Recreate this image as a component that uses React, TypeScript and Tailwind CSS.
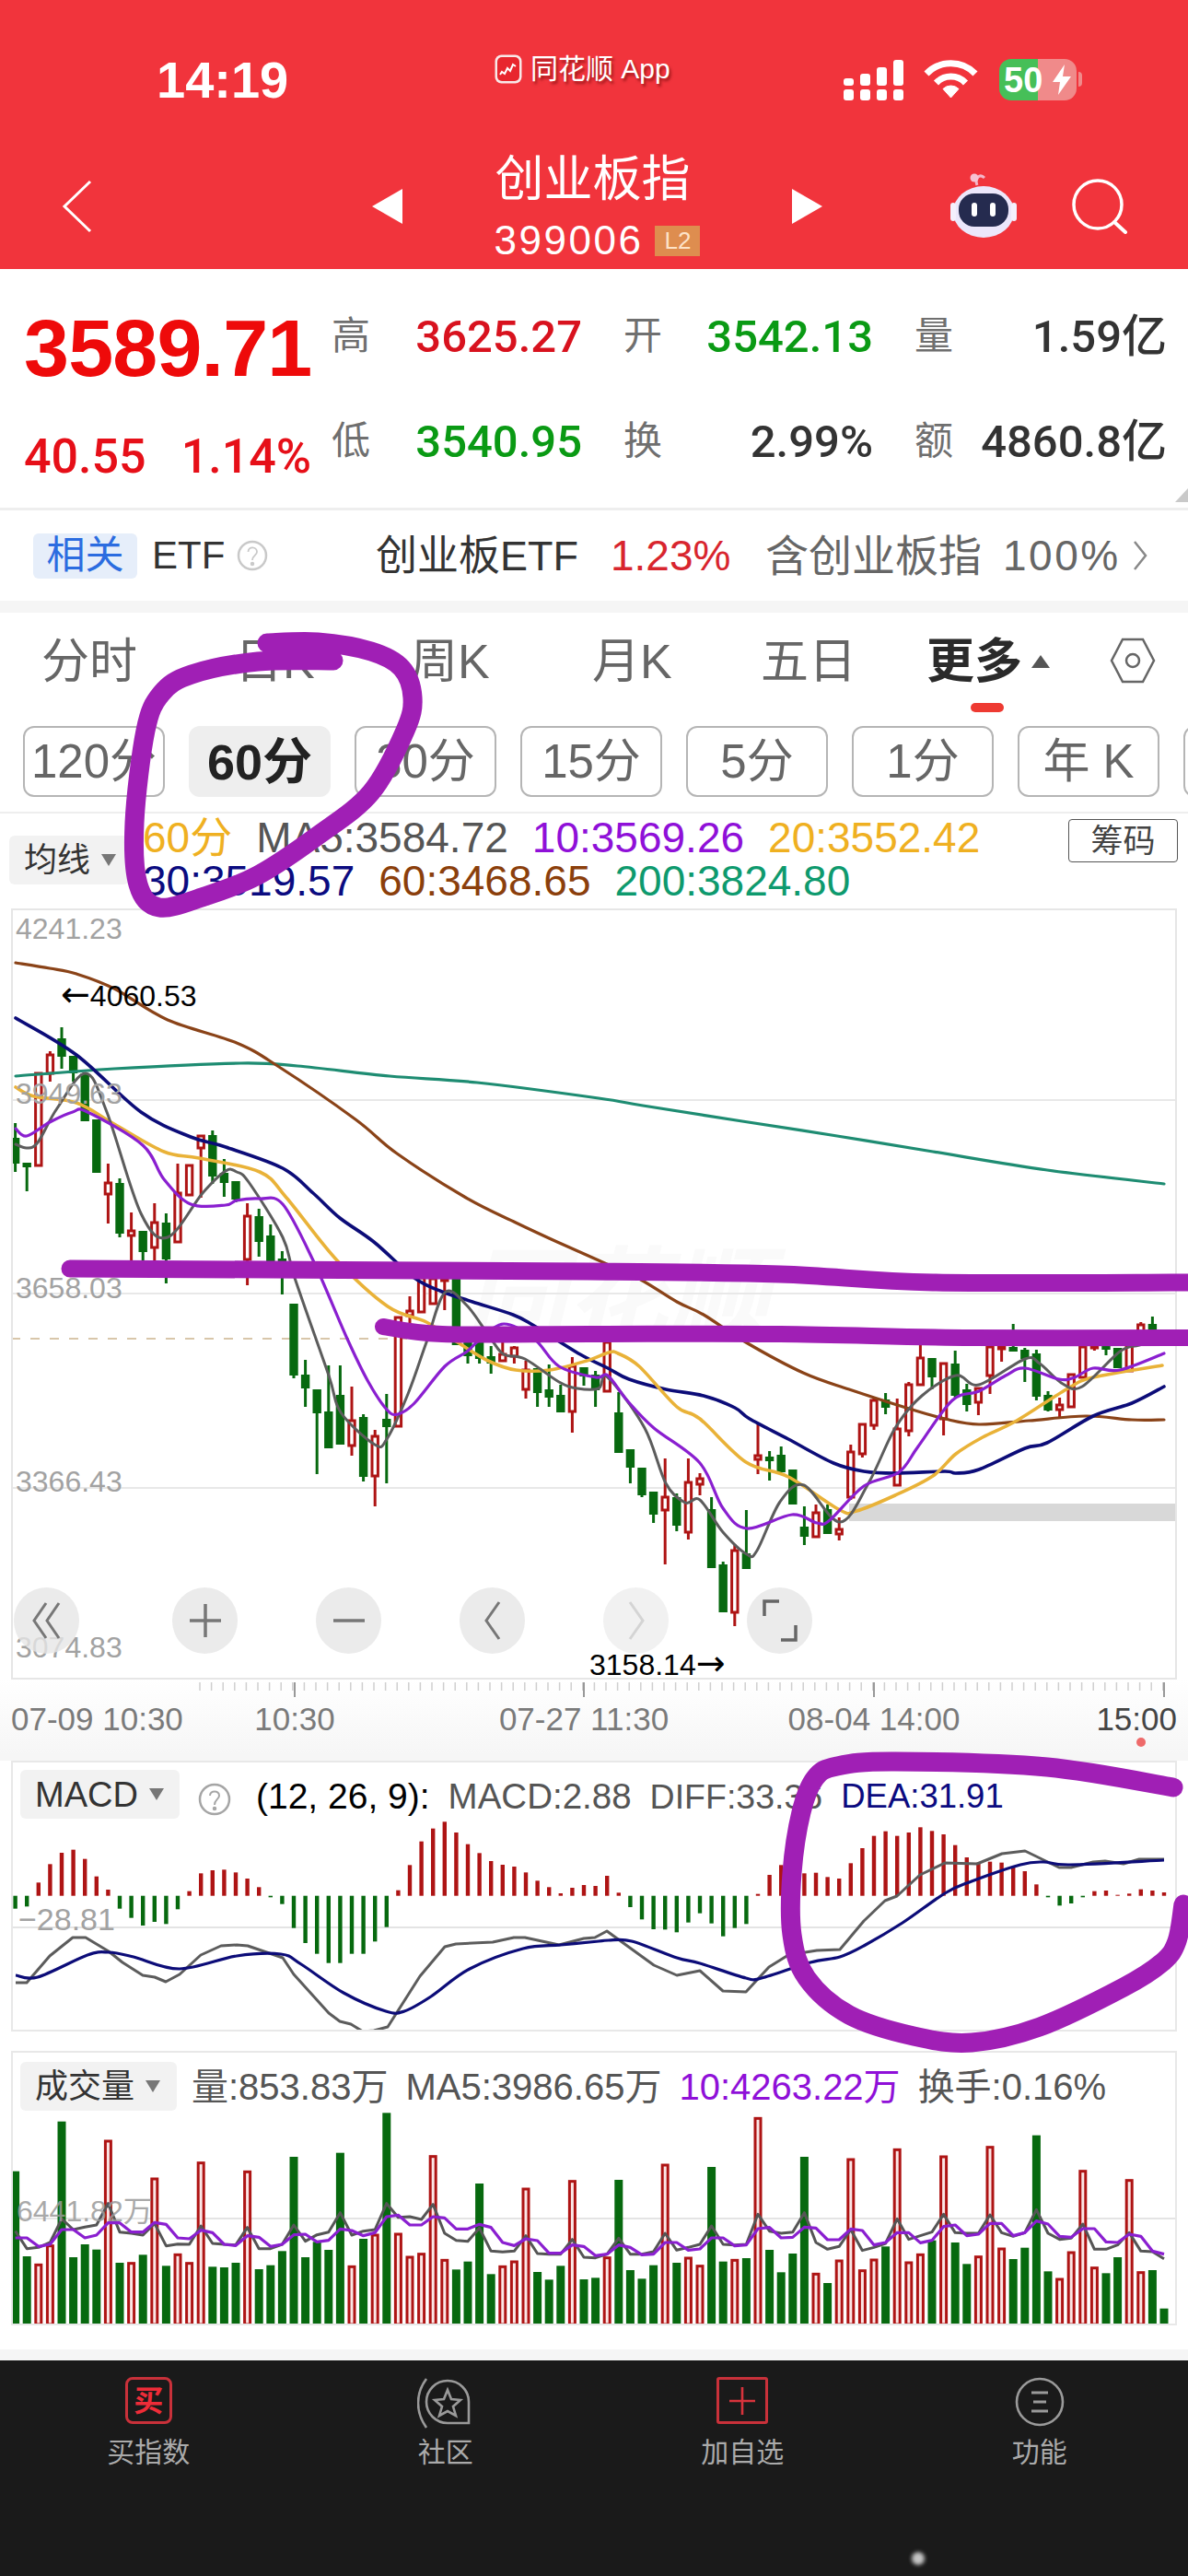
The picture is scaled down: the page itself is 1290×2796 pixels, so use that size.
import React from "react";

type P = [number, number];
const pairs = (a: number[]): P[] => {
  const r: P[] = [];
  for (let i = 0; i < a.length; i += 2) r.push([a[i], a[i + 1]]);
  return r;
};
const smooth = (p: P[]) => {
  let d = `M${p[0][0]} ${p[0][1]}`;
  for (let i = 0; i < p.length - 1; i++) {
    const a = p[Math.max(i - 1, 0)], b = p[i], c = p[i + 1], e = p[Math.min(i + 2, p.length - 1)];
    const k = 6;
    d += ` C${(b[0] + (c[0] - a[0]) / k).toFixed(1)} ${(b[1] + (c[1] - a[1]) / k).toFixed(1)} ${(c[0] - (e[0] - b[0]) / k).toFixed(1)} ${(c[1] - (e[1] - b[1]) / k).toFixed(1)} ${c[0]} ${c[1]}`;
  }
  return d;
};
const X = (i: number) => 16.6 + 12.6 * i;
const GREEN = "#07690f";
const RED = "#ae1414";
const PURPLE = "#a01fb5";

// [red?, bodyTop, bodyBottom, wickTop, wickBottom]
const candles: number[][] = [
  [0,1235,1263,1219,1272],[0,1262,1267,1262,1293],[1,1165,1265,1165,1265],[1,1145,1165,1141,1174],[0,1127,1147,1115,1160],
  [0,1146,1165,1146,1174],[0,1165,1217,1165,1217],[0,1215,1273,1215,1273],[1,1284,1296,1263,1328],[0,1284,1339,1279,1343],
  [1,1336,1341,1316,1368],[0,1336,1359,1336,1368],[1,1327,1354,1306,1368],[0,1327,1367,1317,1393],[1,1295,1348,1263,1348],
  [1,1265,1297,1265,1297],[1,1233,1246,1233,1300],[0,1232,1277,1227,1285],[0,1273,1284,1258,1299],[0,1282,1302,1282,1305],
  [1,1320,1367,1306,1395],[0,1320,1348,1312,1364],[0,1341,1370,1329,1372],[0,1366,1378,1358,1405],[0,1415,1493,1415,1496],
  [0,1492,1507,1476,1527],[0,1508,1534,1508,1600],[0,1532,1572,1482,1572],[0,1514,1568,1482,1568],[1,1542,1569,1505,1580],
  [0,1538,1603,1535,1608],[1,1559,1602,1552,1635],[0,1540,1549,1513,1610],[1,1430,1548,1430,1548],[1,1423,1428,1407,1453],
  [1,1387,1424,1387,1424],[1,1388,1415,1388,1415],[1,1387,1390,1387,1422],[0,1388,1460,1388,1460],[0,1457,1472,1445,1480],
  [0,1452,1475,1452,1480],[0,1472,1480,1461,1491],[1,1470,1477,1440,1477],[1,1463,1472,1461,1480],[1,1487,1508,1477,1518],
  [0,1485,1512,1485,1527],[0,1508,1517,1481,1527],[0,1514,1533,1503,1533],[1,1483,1532,1473,1555],[0,1484,1494,1484,1504],
  [0,1492,1509,1488,1527],[1,1457,1510,1440,1510],[0,1533,1577,1511,1577],[0,1573,1593,1573,1610],[0,1593,1623,1593,1625],
  [0,1619,1644,1619,1653],[1,1625,1639,1583,1698],[0,1625,1656,1621,1662],[1,1609,1663,1583,1671],[1,1605,1611,1599,1623],
  [0,1638,1702,1625,1702],[0,1698,1750,1695,1750],[1,1683,1750,1676,1765],[0,1686,1703,1639,1703],[1,1580,1584,1545,1600],
  [0,1581,1586,1575,1607],[0,1579,1598,1570,1598],[0,1595,1633,1595,1633],[0,1657,1668,1635,1677],[1,1642,1668,1633,1668],
  [0,1638,1665,1633,1665],[1,1660,1665,1647,1672],[1,1576,1625,1568,1628],[1,1546,1578,1546,1582],[1,1520,1547,1518,1552],
  [0,1519,1528,1512,1535],[1,1551,1612,1518,1612],[1,1503,1553,1500,1559],[1,1474,1503,1460,1503],[0,1474,1495,1474,1508],
  [1,1480,1540,1480,1558],[0,1480,1515,1466,1517],[0,1508,1525,1502,1532],[1,1507,1522,1507,1536],[1,1462,1493,1462,1513],
  [1,1462,1464,1450,1478],[0,1462,1467,1437,1467],[0,1465,1475,1463,1500],[0,1469,1516,1465,1520],[0,1514,1531,1510,1532],
  [1,1525,1530,1517,1538],[1,1492,1527,1492,1527],[1,1462,1495,1462,1495],[1,1460,1463,1458,1466],[0,1460,1465,1458,1471],
  [0,1463,1485,1463,1485],[1,1460,1488,1455,1488],[1,1438,1453,1435,1453],[0,1437,1453,1429,1453],[0,1445,1455,1443,1458],
];

const ma200 = pairs([17,1168,124,1160,261,1154,323,1157,423,1168,518,1175,650,1192,698,1200,806,1217,909,1233,1013,1250,1137,1270,1264,1285]);
const ma60 = pairs([17,1045,54,1051,83,1057,124,1073,182,1107,257,1132,303,1158,386,1215,431,1252,506,1300,560,1327,605,1348,650,1368,694,1388,735,1413,764,1427,810,1457,872,1490,922,1508,984,1528,1026,1540,1063,1546,1117,1542,1179,1537,1229,1541,1264,1541]);
const ma30 = pairs([17,1105,83,1145,153,1207,207,1234,245,1245,307,1268,340,1295,369,1322,406,1348,450,1387,480,1402,513,1413,557,1427,580,1439,630,1470,660,1485,683,1497,723,1508,764,1515,798,1528,814,1540,856,1562,905,1588,938,1597,972,1599,1026,1597,1038,1599,1063,1595,1113,1572,1137,1566,1187,1537,1229,1523,1264,1505]);
const ma20 = pairs([17,1180,37,1190,83,1197,124,1220,178,1250,216,1257,282,1272,311,1300,365,1367,421,1418,463,1435,497,1457,530,1477,560,1487,597,1487,637,1477,661,1468,671,1469,694,1483,735,1527,760,1540,810,1587,856,1603,912,1639,930,1640,972,1623,1013,1602,1038,1578,1067,1560,1104,1542,1158,1508,1187,1495,1262,1482]);
const ma10 = pairs([17,1225,29,1233,54,1218,79,1207,95,1207,155,1243,178,1280,207,1307,245,1308,257,1303,282,1301,307,1307,340,1368,377,1453,400,1500,420,1530,432,1535,450,1523,483,1483,507,1467,520,1455,547,1437,580,1453,607,1483,647,1495,660,1493,681,1520,710,1550,760,1588,785,1637,811,1659,860,1644,887,1653,901,1650,938,1613,976,1598,997,1570,1034,1520,1063,1510,1092,1493,1113,1485,1150,1497,1167,1495,1187,1485,1216,1487,1264,1469]);
const ma5 = pairs([17,1242,29,1246,41,1240,62,1203,93,1165,116,1207,153,1317,182,1343,220,1295,245,1271,257,1272,270,1283,307,1343,320,1387,357,1493,370,1533,407,1568,420,1562,443,1513,463,1457,483,1403,507,1417,533,1453,547,1470,570,1475,607,1500,627,1507,650,1507,660,1495,700,1550,723,1610,744,1631,760,1628,785,1663,811,1687,822,1683,847,1630,873,1612,912,1652,943,1610,972,1550,1001,1515,1038,1493,1063,1503,1113,1475,1129,1480,1154,1502,1175,1505,1216,1467,1237,1460,1264,1452]);

const macd = [515,508,430,370,333,323,353,410,453,515,545,570,558,565,517,458,400,390,388,397,417,445,478,500,578,627,662,692,692,662,662,622,575,455,373,296,254,232,267,305,334,360,372,378,397,424,445,465,447,438,441,408,463,510,550,582,583,592,560,530,563,605,578,565,467,405,373,400,400,398,412,417,367,318,278,263,278,267,250,262,273,308,348,365,362,365,378,393,436,478,505,498,478,458,456,470,466,452,456,462];
const diff = pairs([17,2152,29,2152,54,2123,79,2103,93,2103,118,2118,133,2130,155,2144,168,2146,180,2151,195,2143,218,2122,240,2112,257,2111,269,2112,307,2125,319,2143,357,2185,369,2194,381,2197,394,2205,406,2204,421,2200,456,2145,483,2113,495,2110,535,2108,558,2103,570,2103,607,2111,634,2104,646,2103,659,2096,681,2112,710,2133,735,2144,760,2139,785,2161,810,2162,835,2135,856,2122,887,2117,912,2116,938,2085,961,2063,974,2058,999,2035,1026,2022,1061,2023,1088,2012,1113,2009,1150,2027,1163,2027,1187,2021,1200,2020,1220,2023,1237,2018,1264,2018]);
const dea = pairs([17,2144,41,2146,95,2122,118,2119,145,2124,195,2137,257,2123,305,2121,327,2132,373,2163,419,2183,439,2183,468,2167,510,2137,568,2115,609,2111,650,2107,661,2106,686,2107,735,2125,760,2131,810,2147,827,2147,880,2130,912,2124,938,2112,980,2087,1026,2055,1055,2042,1108,2024,1133,2021,1162,2024,1264,2019]);

const volRed = new Set([2,3,8,10,12,14,15,16,20,29,31,33,34,35,36,37,42,43,44,48,51,56,58,59,62,64,69,71,72,73,74,76,77,78,80,83,84,85,90,91,92,93,96,97]);
const vol = [230,507,535,473,68,510,468,485,132,528,530,502,255,538,502,530,203,541,543,528,232,549,536,490,183,510,460,486,170,541,450,438,40,435,510,500,182,520,550,524,270,565,541,525,288,558,583,538,263,582,577,512,258,552,580,536,210,528,513,539,216,524,520,513,58,486,559,498,183,565,594,522,192,554,519,475,160,528,502,455,183,462,532,509,152,483,516,479,113,556,582,495,230,545,562,510,260,560,552,677];
const vma5 = [425,482,478,462,385,420,412,405,335,428,432,438,400,473,467,468,408,465,468,470,413,482,482,468,405,458,437,428,365,438,425,420,335,380,378,387,338,432,455,458,415,490,493,490,440,498,500,500,452,510,512,500,448,500,500,492,432,487,478,468,408,468,470,468,370,425,432,428,365,462,484,475,420,488,478,465,385,452,440,428,370,430,432,432,372,430,442,430,355,432,452,448,402,484,484,470,430,490,492,515];
const vma10 = [447,447,475,468,420,420,447,438,398,398,428,428,397,403,447,450,422,430,468,472,440,445,475,468,437,435,460,455,418,423,440,430,378,373,405,405,378,382,418,418,403,413,462,472,450,456,497,497,470,475,505,500,470,478,502,500,462,462,487,483,447,447,473,470,417,413,447,445,412,415,453,453,418,423,470,462,430,430,463,455,410,405,440,435,400,400,440,430,392,402,442,445,417,417,460,462,435,442,490,500];
const vy = (z: number) => 2280 + z / 3;

const circle1 = pairs([290,698,345,697,403,707,436,725,448,757,440,793,403,860,345,907,280,950,222,973,173,985,150,960,146,893,158,793,175,753,208,732,280,718,362,717]);
const line1 = pairs([76,1377,640,1380,847,1383,1013,1392,1290,1392]);
const line2 = pairs([416,1440,480,1448,640,1448,847,1448,1055,1452,1290,1452]);
const circle3 = pairs([1274,1940,1137,1918,972,1912,909,1917,885,1930,870,1967,860,2033,860,2100,876,2147,922,2187,992,2210,1055,2217,1129,2200,1220,2157,1262,2130,1278,2107,1285,2067]);

function Tri() {
  return <span className="ml-[12px] inline-block h-0 w-0 border-x-[8px] border-t-[13px] border-x-transparent border-t-[#777]" />;
}
function Label({ className, children }: { className: string; children: React.ReactNode }) {
  return <span className={`absolute whitespace-nowrap text-[32px] leading-none ${className}`}>{children}</span>;
}
function Stat({ label, value, color, w, vw }: { label: string; value: string; color: string; w: string; vw: string }) {
  return (
    <div className={`flex items-center ${w}`}>
      <span className="w-[96px] text-[42px] leading-none text-[#6f6f6f]">{label}</span>
      <span className={`flex justify-end whitespace-nowrap font-['Roboto','Noto_Sans_CJK_SC',sans-serif] text-[49px] font-medium leading-none ${vw} ${color}`}>{value}</span>
    </div>
  );
}
function RoundBtn({ children, className = "" }: { children: React.ReactNode; className?: string }) {
  return <div className={`flex h-[72px] w-[71px] items-center justify-center rounded-full ${className}`}>{children}</div>;
}

export default function App() {
  return (
    <div className="relative flex h-[2796px] w-[1290px] flex-col overflow-hidden bg-white font-['Liberation_Sans','Noto_Sans_CJK_SC',sans-serif]">
      {/* Header */}
      <header className="h-[292px] bg-[#f1343c] text-white">
        <div className="flex h-[150px] items-start pl-[170px]">
          <div className="mt-[57px] w-[366px] text-[56px] font-bold leading-[60px]">14:19</div>
          <div className="mt-[57px] flex w-[380px] items-center gap-[8px]">
            <svg width="32" height="34" viewBox="0 0 32 34">
              <rect x="1.5" y="1.5" width="29" height="31" rx="7" fill="#f8e8e8" />
              <rect x="4" y="4" width="24" height="26" rx="5" fill="#e8262e" />
              <path d="M7 23l2-3 3 2 3-6 3 3 3-7 3 2" stroke="#fff" strokeWidth="2" fill="none" />
            </svg>
            <span className="text-[30px] leading-[36px] [text-shadow:2px_3px_3px_rgba(90,0,0,0.55)]">同花顺 App</span>
          </div>
          <svg className="mt-[65px]" width="65" height="44" viewBox="0 0 65 44" fill="#fff">
            <rect x="0" y="32" width="11" height="12" rx="3" /><rect x="18" y="32" width="11" height="12" rx="3" /><rect x="36" y="32" width="11" height="12" rx="3" /><rect x="54" y="32" width="11" height="12" rx="3" />
            <rect x="0" y="20" width="11" height="8" rx="3" /><rect x="18" y="15" width="11" height="13" rx="3" /><rect x="36" y="8" width="11" height="20" rx="3" /><rect x="54" y="0" width="11" height="28" rx="3" />
          </svg>
          <svg className="ml-[22px] mt-[65px]" width="59" height="42" viewBox="0 0 59 42" fill="none" stroke="#fff" strokeWidth="7">
            <path d="M3 15 A37 37 0 0 1 56 15" />
            <path d="M13.5 25 A22 22 0 0 1 45.5 25" />
            <path d="M29.5 41 L21 31.5 A12 12 0 0 1 38 31.5 Z" fill="#fff" strokeWidth="1" />
          </svg>
          <div className="relative ml-[23px] mt-[64px] flex h-[45px] w-[84px] overflow-hidden rounded-[13px]">
            <div className="w-[42px] bg-[#46bf58]" />
            <div className="flex-1 bg-[#f08a8a]" />
            <span className="absolute left-[5px] top-[4px] text-[38px] font-bold leading-[38px] text-white">50</span>
            <svg className="absolute left-[57px] top-[6px]" width="22" height="33" viewBox="0 0 22 33" fill="#fff"><path d="M14 0 L1 19 H9 L7 33 L21 13 H12 Z" /></svg>
          </div>
          <div className="ml-[2px] mt-[78px] h-[16px] w-[4px] rounded-r-full bg-[#f08a8a]" />
        </div>
        <div className="flex h-[142px] items-center pt-[6px]">
          <svg className="ml-[67px]" width="34" height="58" viewBox="0 0 34 58" fill="none" stroke="#fff" strokeWidth="3"><path d="M31 2 L3 29 L31 56" /></svg>
          <svg className="ml-[303px]" width="34" height="38" viewBox="0 0 34 38" fill="#fff"><path d="M33 0 V38 L0 19 Z" /></svg>
          <div className="flex w-[421px] flex-col items-center self-start pt-[7px]">
            <div className="mr-[10px] text-[53px] leading-[64px]">创业板指</div>
            <div className="mt-[16px] flex items-center gap-[13px]">
              <span className="text-[44px] leading-[36px] tracking-[2.5px]">399006</span>
              <span className="flex h-[33px] w-[49px] items-center justify-center bg-[#de8d4f] text-[26px] leading-none text-[#fde3c8]">L2</span>
            </div>
          </div>
          <svg width="34" height="38" viewBox="0 0 34 38" fill="#fff"><path d="M1 0 V38 L34 19 Z" /></svg>
          <svg className="ml-[138px]" width="74" height="72" viewBox="0 0 74 72">
            <path d="M30 13 C27 5 33 0 38 5" stroke="#f3b6c8" strokeWidth="3" fill="none" />
            <circle cx="27" cy="5" r="4.5" fill="#f6c3d2" />
            <ellipse cx="37" cy="42" rx="33" ry="28" fill="#ece7fb" />
            <rect x="1" y="32" width="6" height="20" rx="3" fill="#f4f0fd" />
            <rect x="67" y="32" width="6" height="20" rx="3" fill="#f4f0fd" />
            <rect x="10" y="22" width="54" height="36" rx="17" fill="#252b4f" />
            <rect x="24" y="32" width="6" height="15" rx="3" fill="#fff" />
            <rect x="44" y="32" width="6" height="15" rx="3" fill="#fff" />
          </svg>
          <svg className="ml-[59px]" width="62" height="60" viewBox="0 0 62 60" fill="none" stroke="#fff" strokeWidth="3.5">
            <circle cx="28" cy="28" r="26" /><path d="M46 47 L58 58" strokeLinecap="round" strokeWidth="4" />
          </svg>
        </div>
      </header>

      {/* Quote */}
      <section className="relative flex h-[259px] bg-white">
        <div className="w-[360px] pl-[26px] pt-[42px]">
          <div className="text-[88px] font-bold leading-[88px] tracking-[-0.8px] text-[#ee0a0a]">3589.71</div>
          <div className="mt-[46px] flex gap-[38px] font-['Roboto','Liberation_Sans',sans-serif] text-[52px] font-medium leading-[56px] text-[#e60f18]">
            <span>40.55</span>
            <span>1.14%</span>
          </div>
        </div>
        <div className="flex flex-col pt-[51px]">
          <div className="flex h-[44px] items-center">
            <Stat label="高" value="3625.27" color="text-[#d8121e]" w="w-[317px]" vw="w-[176px]" />
            <Stat label="开" value="3542.13" color="text-[#0a9a14]" w="w-[316px]" vw="w-[175px]" />
            <Stat label="量" value="1.59亿" color="text-[#333]" w="w-[274px]" vw="w-[178px]" />
          </div>
          <div className="mt-[70px] flex h-[44px] items-center">
            <Stat label="低" value="3540.95" color="text-[#0a9a14]" w="w-[317px]" vw="w-[176px]" />
            <Stat label="换" value="2.99%" color="text-[#333]" w="w-[316px]" vw="w-[175px]" />
            <Stat label="额" value="4860.8亿" color="text-[#333]" w="w-[274px]" vw="w-[178px]" />
          </div>
        </div>
        <div className="absolute bottom-[6px] right-0 h-0 w-0 border-b-[15px] border-l-[14px] border-b-[#c9c9c9] border-l-transparent" />
      </section>
      <div className="h-[3px] bg-[#eeeeee]" />

      {/* ETF row */}
      <section className="flex h-[98px] items-center whitespace-nowrap bg-white pl-[36px] text-[42px] leading-none">
        <span className="flex h-[49px] w-[113px] items-center justify-center rounded-[6px] bg-[#e6eefa] text-[#2b6ce0]">相关</span>
        <span className="ml-[16px] w-[82px] text-[#333]">ETF</span>
        <svg className="ml-[10px]" width="34" height="38" viewBox="0 0 34 38" fill="none" stroke="#c9c9c9" strokeWidth="2.5">
          <circle cx="17" cy="19" r="15" />
          <path d="M12.5 15 C12.5 8.5 22 9 22 15 C22 19 17 19 17 24" strokeWidth="1.8" />
          <circle cx="17" cy="28" r="1" />
        </svg>
        <span className="ml-[117px] w-[255px] text-[45px] text-[#333]">创业板ETF</span>
        <span className="w-[168px] text-[46px] text-[#d8252e]">1.23%</span>
        <span className="w-[258px] text-[47px] text-[#666]">含创业板指</span>
        <span className="w-[140px] text-[46px] tracking-[2.5px] text-[#666]">100%</span>
        <svg width="18" height="36" viewBox="0 0 18 36" fill="none" stroke="#888" strokeWidth="2.5"><path d="M3 3 L15 18 L3 33" /></svg>
      </section>
      <div className="h-[13px] bg-[#f5f5f5]" />

      {/* Tabs */}
      <nav className="relative flex h-[123px] items-start whitespace-nowrap bg-white pl-[45px] pt-[27px] text-[52px] leading-[52px] text-[#666]">
        <span className="w-[210px]">分时</span>
        <span className="w-[190px]">日K</span>
        <span className="w-[198px]">周K</span>
        <span className="w-[183px]">月K</span>
        <span className="w-[180px]">五日</span>
        <span className="flex w-[199px] items-center font-bold text-[#2a2a2a]">
          更多
          <span className="ml-[10px] h-0 w-0 border-x-[10px] border-b-[14px] border-x-transparent border-b-[#555]" />
        </span>
        <svg width="50" height="50" viewBox="0 0 50 50" fill="none" stroke="#666" strokeWidth="2.5">
          <path d="M14 2 H36 L48 25 L36 48 H14 L2 25 Z" />
          <circle cx="25" cy="25" r="7" />
        </svg>
        <div className="absolute left-[1054px] top-[98px] h-[10px] w-[36px] rounded-full bg-[#ee3a32]" />
      </nav>

      {/* Period chips */}
      <div className="flex h-[77px] gap-[26px] overflow-hidden bg-white pl-[25px] text-[51px] leading-none text-[#666]">
        {["120分", "60分", "30分", "15分", "5分", "1分", "年 K", ""].map((t) => (
          <div
            key={t}
            className={
              t === "60分"
                ? "flex h-[77px] w-[154px] shrink-0 items-center justify-center rounded-[12px] bg-[#eeeeee] text-[54px] font-bold text-[#222]"
                : "flex h-[77px] w-[154px] shrink-0 items-center justify-center rounded-[12px] border-2 border-[#b5b5b5]"
            }
          >
            {t}
          </div>
        ))}
      </div>
      <div className="h-[16px] bg-white" />
      <div className="h-[2px] bg-[#eeeeee]" />

      {/* Legend */}
      <div className="relative h-[103px] bg-white text-[46px] leading-[47px]">
        <div className="absolute left-[10px] top-[24px] flex h-[53px] w-[130px] items-center rounded-[6px] bg-[#f2f2f2] pl-[16px] text-[36px] text-[#333]">
          均线<Tri />
        </div>
        <div className="ml-[155px] pt-[3px]">
          <div className="flex gap-[26px] whitespace-nowrap">
            <span className="text-[#efb021]">60分</span>
            <span className="text-[#555]">MA5:3584.72</span>
            <span className="text-[#8f10d8]">10:3569.26</span>
            <span className="text-[#efb021]">20:3552.42</span>
          </div>
          <div className="flex gap-[26px] whitespace-nowrap">
            <span className="text-[#0b0b80]">30:3519.57</span>
            <span className="text-[#8b3f0c]">60:3468.65</span>
            <span className="text-[#0e9a6e]">200:3824.80</span>
          </div>
        </div>
        <div className="absolute left-[1160px] top-[6px] flex h-[47px] w-[119px] items-center justify-center rounded-[4px] border border-[#555] text-[35px] leading-none text-[#444]">筹码</div>
      </div>

      {/* Main chart */}
      <div className="px-[12px]">
        <div className="relative h-[837px] w-[1266px] outline-2 -outline-offset-2 outline-[#e6e6e6]">
          <svg className="block" width="1266" height="837" viewBox="12 986 1266 837">
            <text x="505" y="1445" fontSize="110" fill="#fafafa" fontStyle="italic" fontWeight="700">同花顺</text>
            {[1194, 1404, 1615].map((y) => <line key={y} x1="12" x2="1278" y1={y} y2={y} stroke="#e8e8e8" strokeWidth="2" />)}
            <line x1="12" x2="1278" y1="1453" y2="1453" stroke="#d8c6aa" strokeWidth="2" strokeDasharray="10 11" />
            <rect x="922" y="1632" width="356" height="19" fill="#d8d8d8" />
            {candles.map((c, i) => {
              const x = X(i);
              const col = c[0] ? RED : GREEN;
              return (
                <g key={i}>
                  <line x1={x} x2={x} y1={c[3]} y2={c[4]} stroke={col} strokeWidth="3" />
                  {c[0] ? (
                    <rect x={x - 3.2} y={c[1]} width="6.4" height={c[2] - c[1]} fill="#fff" stroke={col} strokeWidth="3" />
                  ) : (
                    <rect x={x - 4.7} y={c[1]} width="9.4" height={c[2] - c[1]} fill={col} />
                  )}
                </g>
              );
            })}
            <g fill="none" strokeLinejoin="round" strokeLinecap="round">
              <path d={smooth(ma200)} stroke="#1e8c72" strokeWidth="3.2" />
              <path d={smooth(ma60)} stroke="#8a4318" strokeWidth="3.2" />
              <path d={smooth(ma30)} stroke="#0c0c78" strokeWidth="3.6" />
              <path d={smooth(ma20)} stroke="#e9b238" strokeWidth="3.6" />
              <path d={smooth(ma5)} stroke="#5c5c5c" strokeWidth="3" />
              <path d={smooth(ma10)} stroke="#8a1fd0" strokeWidth="3.2" />
            </g>
          </svg>
          <Label className="left-[5px] top-[6px] text-[#a2a2a2]">4241.23</Label>
          <Label className="left-[54px] top-[74px] text-black"><span className="font-['DejaVu_Sans',sans-serif] text-[38px]">←</span>4060.53</Label>
          <Label className="left-[5px] top-[185px] text-[#a2a2a2]">3949.63</Label>
          <Label className="left-[5px] top-[396px] text-[#a2a2a2]">3658.03</Label>
          <Label className="left-[5px] top-[606px] text-[#a2a2a2]">3366.43</Label>
          <Label className="left-[5px] top-[786px] text-[#a2a2a2]">3074.83</Label>
          <Label className="left-[628px] top-[800px] text-black">3158.14<span className="font-['DejaVu_Sans',sans-serif] text-[38px]">→</span></Label>
          <div className="absolute left-[3px] top-[737px] flex gap-[85px]">
            <RoundBtn className="mr-[16px] bg-[#e6e6e6]/80">
              <svg width="36" height="44" viewBox="0 0 36 44" fill="none" stroke="#777" strokeWidth="3"><path d="M17 3 L4 22 L17 41 M31 3 L18 22 L31 41" /></svg>
            </RoundBtn>
            <RoundBtn className="bg-[#e6e6e6]/80">
              <svg width="36" height="40" viewBox="0 0 36 40" fill="none" stroke="#777" strokeWidth="3.5"><path d="M1 20 H35 M18 2 V38" /></svg>
            </RoundBtn>
            <RoundBtn className="bg-[#e6e6e6]/80">
              <svg width="36" height="6" viewBox="0 0 36 6" stroke="#777" strokeWidth="3.5"><path d="M1 3 H35" /></svg>
            </RoundBtn>
            <RoundBtn className="bg-[#e6e6e6]/80">
              <svg width="20" height="44" viewBox="0 0 20 44" fill="none" stroke="#777" strokeWidth="3"><path d="M17 2 L3 22 L17 42" /></svg>
            </RoundBtn>
            <RoundBtn className="bg-[#eeeeee]/80">
              <svg width="20" height="44" viewBox="0 0 20 44" fill="none" stroke="#d4d4d4" strokeWidth="3"><path d="M3 2 L17 22 L3 42" /></svg>
            </RoundBtn>
            <RoundBtn className="bg-[#e6e6e6]/80">
              <svg width="38" height="46" viewBox="0 0 38 46" fill="none" stroke="#666" strokeWidth="3.5"><path d="M2 18 V2 H18 M36 28 V44 H20" /></svg>
            </RoundBtn>
          </div>
        </div>
      </div>

      {/* Time axis */}
      <div className="h-[82px] bg-[linear-gradient(#ffffff,#f6f6f6)]">
        <svg className="block" width="1290" height="20" viewBox="0 1823 1290 20">
          {Array.from({ length: 84 }, (_, i) => 217 + 12.6 * i).map((x) => <line key={x} x1={x} x2={x} y1="1826" y2="1835" stroke="#cfcfcf" strokeWidth="1.5" />)}
          {[320, 634, 949, 1264].map((x) => <line key={x} x1={x} x2={x} y1="1826" y2="1842" stroke="#999" strokeWidth="2" />)}
        </svg>
        <div className="mt-[5px] flex pl-[12px] text-[35px] leading-[36px] text-[#7a7a7a]">
          <span className="w-[228px] whitespace-nowrap">07-09 10:30</span>
          <span className="flex w-[160px] justify-center whitespace-nowrap">10:30</span>
          <span className="flex w-[468px] justify-center whitespace-nowrap">07-27 11:30</span>
          <span className="flex w-[162px] justify-center whitespace-nowrap">08-04 14:00</span>
          <span className="relative flex w-[248px] justify-end whitespace-nowrap text-[#444]">
            15:00
            <span className="absolute right-[34px] top-[38px] h-[10px] w-[10px] rounded-full bg-[#ee6a6a]" />
          </span>
        </div>
      </div>
      <div className="h-[6px] bg-[#f6f6f6]" />

      {/* MACD */}
      <div className="px-[12px]">
        <div className="relative h-[294px] w-[1266px] outline-2 -outline-offset-2 outline-[#e8e8e8]">
          <svg className="block" width="1266" height="294" viewBox="12 1911 1266 294">
            <line x1="12" x2="1278" y1="2092" y2="2092" stroke="#e4e4e4" strokeWidth="2" />
            {macd.map((z, i) => {
              const y = 1900 + z / 3;
              const zero = 2057.7;
              return <rect key={i} x={X(i) - 2.2} y={Math.min(y, zero)} width="4.4" height={Math.abs(y - zero)} fill={y < zero ? RED : GREEN} />;
            })}
            <g fill="none" strokeLinejoin="round">
              <polyline points={diff.map((p) => p.join(",")).join(" ")} stroke="#5c5c5c" strokeWidth="3" />
              <path d={smooth(dea)} stroke="#0c0c78" strokeWidth="3.2" />
            </g>
          </svg>
          <div className="absolute left-[10px] top-[10px] flex h-[53px] w-[173px] items-center rounded-[6px] bg-[#f2f2f2] pl-[16px] text-[38px] leading-none text-[#333]">MACD<Tri /></div>
          <svg className="absolute left-[202px] top-[23px]" width="38" height="38" viewBox="0 0 38 38" fill="none" stroke="#a5a5a5" strokeWidth="2.5">
            <circle cx="19" cy="19" r="16" />
            <path d="M14 15 C14 9 24 9 24 15 C24 19 19 19 19 25" strokeWidth="2" />
            <circle cx="19" cy="29" r="1" />
          </svg>
          <div className="absolute left-[266px] top-[15px] flex items-center gap-[20px] whitespace-nowrap leading-[48px] text-[#555]">
            <span className="text-[39px] text-black">(12, 26, 9):</span>
            <span className="text-[38.5px]">MACD:2.88</span>
            <span className="text-[37.5px]">DIFF:33.36</span>
            <span className="text-[36.5px] text-[#0b0b80]">DEA:31.91</span>
          </div>
          <Label className="left-[8px] top-[155px] text-[34px]! text-[#a2a2a2]">−28.81</Label>
        </div>
      </div>
      <div className="h-[21px] bg-white" />

      {/* Volume */}
      <div className="px-[12px]">
        <div className="relative h-[298px] w-[1266px] outline-2 -outline-offset-2 outline-[#e8e8e8]">
          <svg className="block" width="1266" height="298" viewBox="12 2226 1266 298">
            <line x1="12" x2="1278" y1="2408" y2="2408" stroke="#e4e4e4" strokeWidth="2" />
            {vol.map((z, i) =>
              volRed.has(i) ? (
                <rect key={i} x={X(i) - 3} y={vy(z)} width="6" height={2523 - vy(z)} fill="#fbe6e6" stroke={RED} strokeWidth="3" />
              ) : (
                <rect key={i} x={X(i) - 4.5} y={vy(z)} width="9" height={2523 - vy(z)} fill={GREEN} />
              )
            )}
            <g fill="none" strokeLinejoin="round">
              <polyline points={vma5.map((z, i) => `${X(i)},${vy(z)}`).join(" ")} stroke="#555" strokeWidth="3" />
              <polyline points={vma10.map((z, i) => `${X(i)},${vy(z)}`).join(" ")} stroke="#8a1fd0" strokeWidth="3.2" />
            </g>
          </svg>
          <div className="absolute left-[10px] top-[12px] flex h-[53px] w-[170px] items-center rounded-[6px] bg-[#f2f2f2] pl-[16px] text-[36px] leading-none text-[#333]">成交量<Tri /></div>
          <div className="absolute left-[196px] top-[16px] flex gap-[19px] whitespace-nowrap text-[40px] leading-[46px] text-[#555]">
            <span>量:853.83万</span>
            <span>MA5:3986.65万</span>
            <span className="text-[#8f10d8]">10:4263.22万</span>
            <span>换手:0.16%</span>
          </div>
          <Label className="left-[6px] top-[158px] text-[#9a9a9a]/85">6441.82万</Label>
        </div>
      </div>
      <div className="h-[26px] bg-white" />
      <div className="h-[12px] bg-[#f5f5f5]" />

      {/* Bottom bar */}
      <footer className="relative grid h-[234px] grid-cols-4 bg-[#1a1a1a] pt-[18px] text-[30px] leading-[36px] text-[#aaaaaa]">
        <div className="flex flex-col items-center">
          <div className="flex h-[51px] w-[51px] items-center justify-center rounded-[8px] border-[3px] border-[#c9313a] text-[32px] font-bold leading-none text-[#ee2c38]">买</div>
          <span className="mt-[13px]">买指数</span>
        </div>
        <div className="flex flex-col items-center">
          <svg width="62" height="56" viewBox="0 0 62 56" fill="none" stroke="#9a9a9a" strokeWidth="2.6">
            <path d="M10 2 C-2 18 -2 38 10 55" />
            <path d="M33 4 A23 23 0 1 0 33 50 H56 V27 A23 23 0 0 0 33 4 Z" />
            <path d="M33 14 L37 24 L47 25 L39 32 L42 42 L33 37 L24 42 L27 32 L19 25 L29 24 Z" />
          </svg>
          <span className="mt-[8px]">社区</span>
        </div>
        <div className="flex flex-col items-center">
          <div className="flex h-[51px] w-[56px] items-center justify-center rounded-[3px] border-[3px] border-[#c9313a]">
            <svg width="28" height="30" viewBox="0 0 28 30" stroke="#d8333c" strokeWidth="2.6"><path d="M0 15 H28 M14 0 V30" /></svg>
          </div>
          <span className="mt-[13px]">加自选</span>
        </div>
        <div className="flex flex-col items-center">
          <svg width="54" height="54" viewBox="0 0 54 54" fill="none" stroke="#9a9a9a" strokeWidth="2.6">
            <circle cx="27" cy="27" r="25" />
            <path d="M18 17 H36 M20 27 H34 M18 37 H36" strokeWidth="3" />
          </svg>
          <span className="mt-[10px]">功能</span>
        </div>
        <div className="absolute left-[990px] top-[208px] h-[14px] w-[14px] rounded-full bg-white/75 blur-[2px]" />
      </footer>

      {/* Hand-drawn purple marks */}
      <svg className="pointer-events-none absolute left-0 top-0" width="1290" height="2796" viewBox="0 0 1290 2796" fill="none" stroke={PURPLE} strokeLinecap="round" strokeLinejoin="round">
        <path d={smooth(circle1)} strokeWidth="21" />
        <path d={smooth(line1)} strokeWidth="19" />
        <path d={smooth(line2)} strokeWidth="18" />
        <path d={smooth(circle3)} strokeWidth="21" />
      </svg>
    </div>
  );
}
